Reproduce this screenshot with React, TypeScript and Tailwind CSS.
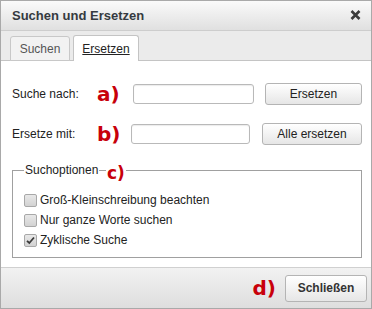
const font = "font-['Liberation_Sans',Arial,sans-serif]";
const mark = "font-['DejaVu_Sans',Verdana,sans-serif] font-bold text-[#c8000a]";

function Btn({ label, className = "", bold = false }: { label: string; className?: string; bold?: boolean }) {
  return (
    <button
      className={`flex items-center justify-center rounded-[3px] border border-[#b4b4b4] bg-gradient-to-b from-[#ffffff] to-[#e6e6e6] text-[12px] text-[#222] ${
        bold ? "font-bold text-[#333]" : ""
      } ${className}`}
    >
      {label}
    </button>
  );
}

function Check({ label, checked = false }: { label: string; checked?: boolean }) {
  return (
    <div className="flex h-[20px] items-center">
      <span className="flex h-[13px] w-[13px] items-center justify-center rounded-[2px] border border-[#a8a8a8] bg-gradient-to-b from-[#e8e8e8] to-[#d2d2d2]">
        {checked && (
          <svg width="9" height="9" viewBox="0 0 9 9">
            <path d="M1 4.8 L3.3 7 L8 1.5" fill="none" stroke="#3a3a3a" strokeWidth="1.8" />
          </svg>
        )}
      </span>
      <span className="ml-[3px] text-[12px] text-[#222]">{label}</span>
    </div>
  );
}

export default function App() {
  return (
    <div className={`flex h-[309px] w-[372px] flex-col border border-[#a9a9a9] ${font}`}>
      <div className="flex h-[30px] items-center justify-between border-b border-[#cdcdcd] bg-gradient-to-b from-[#fafafa] to-[#e0e0e0] pl-[11px] pr-[10px]">
        <span className="text-[13px] font-bold text-[#353a40]">Suchen und Ersetzen</span>
        <svg width="11" height="10" viewBox="0 0 11 10" className="mt-[-2px]">
          <path d="M1.5 1 L9.5 9 M9.5 1 L1.5 9" stroke="#3c3c3c" strokeWidth="2.6" />
        </svg>
      </div>

      <div className="flex h-[30px] items-end gap-[3px] border-b border-[#c4c4c4] bg-[#ebebeb] pl-[9px]">
        <div className="-mb-px flex h-[25px] w-[60px] items-center justify-center rounded-t-[3px] border border-[#c8c8c8] bg-[#f2f2f2] text-[12px] text-[#555]">
          Suchen
        </div>
        <div className="-mb-px flex h-[26px] w-[66px] items-center justify-center rounded-t-[3px] border border-b-0 border-[#c4c4c4] bg-white text-[12px] text-[#222] underline">
          Ersetzen
        </div>
      </div>

      <div className="flex-1 bg-white pt-[22px]">
        <div className="flex h-[22px] items-center pl-[11px]">
          <span className="w-[85px] text-[12px] text-[#222]">Suche nach:</span>
          <span className={`w-[36px] text-[20px] leading-none ${mark}`}>a)</span>
          <input className="h-[20px] w-[121px] rounded-[3px] border border-[#b9b9b9] shadow-[inset_0_1px_1px_rgba(0,0,0,0.08)]" />
          <Btn label="Ersetzen" className="ml-[11px] h-[22px] w-[97px]" />
        </div>
        <div className="mt-[18px] flex h-[22px] items-center pl-[11px]">
          <span className="w-[85px] text-[12px] text-[#222]">Ersetze mit:</span>
          <span className={`w-[34px] text-[20px] leading-none ${mark}`}>b)</span>
          <input className="h-[20px] w-[119px] rounded-[3px] border border-[#b9b9b9] shadow-[inset_0_1px_1px_rgba(0,0,0,0.08)]" />
          <Btn label="Alle ersetzen" className="ml-[12px] h-[22px] w-[100px]" />
        </div>

        <fieldset className="relative ml-[11px] mt-[18px] w-[350px] border border-[#a0a0a0] px-[11px] pb-[7px]">
          <legend className="px-[1px] text-[12px] leading-[14px] text-[#222]">Suchoptionen</legend>
          <span className={`absolute left-[93px] top-[-12px] bg-white px-[1px] text-[17px] leading-[17px] ${mark}`}>c)</span>
          <div className="pt-[13px]">
            <Check label="Groß-Kleinschreibung beachten" />
            <Check label="Nur ganze Worte suchen" />
            <Check label="Zyklische Suche" checked />
          </div>
        </fieldset>
      </div>

      <div className="flex h-[41px] items-center justify-end border-t border-[#d0d0d0] bg-gradient-to-b from-[#f2f2f2] to-[#dedede] pr-[4px]">
        <span className={`text-[20px] leading-none ${mark}`}>d)</span>
        <Btn label="Schließen" bold className="ml-[9px] h-[27px] w-[82px]" />
      </div>
    </div>
  );
}
